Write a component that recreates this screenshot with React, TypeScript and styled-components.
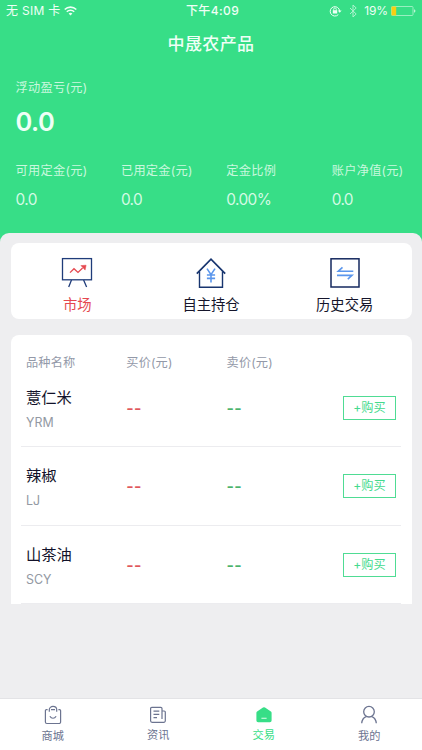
import React from 'react';
import styled, { createGlobalStyle } from 'styled-components';

const GREEN = '#37de87';
const SLATE = '#6c7490';
const NAVY = '#1f3c7a';
const BLUE = '#5b96ec';
const RED = '#e5484f';

const Global = createGlobalStyle`
  * { box-sizing: border-box; }
  body {
    margin: 0;
    background: #eeeef0;
    font-family: Inter, "Noto Sans CJK SC", sans-serif;
  }
`;

const Screen = styled.div`
  width: 422px;
  height: 750px;
  display: flex;
  flex-direction: column;
  overflow: hidden;
  background: #eeeef0;
`;

const Hero = styled.header`
  height: 243px;
  flex: none;
  background: ${GREEN};
  color: #effff6;
`;

const StatusBar = styled.div`
  height: 22px;
  padding: 0 6px;
  display: grid;
  grid-template-columns: 1fr auto 1fr;
  align-items: center;
  font-size: 12px;
  line-height: 22px;
  white-space: nowrap;
`;

const StatusSide = styled.div<{ $end?: boolean }>`
  display: flex;
  align-items: center;
  justify-content: ${(p) => (p.$end ? 'flex-end' : 'flex-start')};
  letter-spacing: ${(p) => (p.$end ? '-0.1px' : '0.3px')};
  svg { flex: none; }
`;

const Clock = styled.div`
  font-weight: 500;
  letter-spacing: 0.4px;
  padding-left: 3px;
`;

const Percent = styled.span`
  margin: 0 3px 0 3px;
`;

const Title = styled.h1`
  margin: 0;
  height: 44px;
  line-height: 45px;
  text-align: center;
  font-size: 17px;
  font-weight: 500;
  letter-spacing: 0.4px;
`;

const Profit = styled.div`
  padding: 12px 15.5px 0;
`;

const Label = styled.div`
  font-size: 12.2px;
  line-height: 20px;
  letter-spacing: 0.3px;
  white-space: nowrap;
  color: #c9f8de;
`;

const BigValue = styled.div`
  margin-top: 8px;
  font-size: 25.5px;
  line-height: 32px;
  font-weight: 600;
  letter-spacing: -0.5px;
`;

const Stats = styled.div`
  display: grid;
  grid-template-columns: repeat(4, 105.4px);
  padding: 23px 0 0 15.5px;
`;

const StatValue = styled.div`
  margin-top: 9px;
  font-size: 15.4px;
  line-height: 20px;
  letter-spacing: -0.6px;
  color: #d3fae4;
`;

const Sheet = styled.main`
  flex: 1;
  margin-top: -10px;
  padding: 10px 10.5px 0;
  border-radius: 9px 9px 0 0;
  background: #eeeef0;
  overflow: hidden;
`;

const NavCard = styled.nav`
  height: 76px;
  padding-top: 14px;
  display: grid;
  grid-template-columns: repeat(3, 1fr);
  border-radius: 8px;
  background: #fff;
`;

const NavItem = styled.div<{ $active?: boolean }>`
  display: flex;
  flex-direction: column;
  align-items: center;
  font-size: 14.3px;
  line-height: 20px;
  color: ${(p) => (p.$active ? RED : '#15152b')};
  svg { margin-bottom: 6px; }
`;

const ListCard = styled.section`
  margin-top: 16px;
  height: 269px;
  border-radius: 8px 8px 0 0;
  background: #fff;
  padding: 0 10.5px 0 10px;
`;

const columns = `
  display: grid;
  grid-template-columns: 100.3px 100.3px 1fr auto;
  padding: 0 5px 0 5.5px;
`;

const TableHead = styled.div`
  ${columns}
  padding-top: 18px;
  height: 34px;
  font-size: 12.2px;
  line-height: 20px;
  letter-spacing: 0.15px;
  color: #9399a8;
`;

const Row = styled.div`
  ${columns}
  height: 78.3px;
  border-bottom: 1px solid #ececef;
`;

const Name = styled.div`
  padding-top: 18px;
  font-size: 15.3px;
  line-height: 22px;
  color: #12122a;
`;

const Code = styled.div`
  margin-top: 4px;
  font-size: 12.4px;
  line-height: 20px;
  color: #9399a3;
`;

const Dashes = styled.span<{ $tone: string }>`
  padding-top: 29px;
  font-size: 16px;
  line-height: 20px;
  font-weight: 600;
  letter-spacing: 0.3px;
  color: ${(p) => p.$tone};
`;

const Buy = styled.button`
  width: 53px;
  height: 24px;
  margin-top: 27px;
  padding: 0;
  border: 1px solid #4fdc94;
  border-radius: 0;
  background: #fff;
  color: #45da8d;
  font: 12.2px/20px Inter, "Noto Sans CJK SC", sans-serif;
`;

const TabBar = styled.footer`
  height: 52px;
  flex: none;
  display: grid;
  grid-template-columns: repeat(4, 1fr);
  border-top: 1px solid #e3e3e6;
  background: #fff;
`;

const Tab = styled.div<{ $active?: boolean; $raised?: boolean }>`
  display: flex;
  flex-direction: column;
  align-items: center;
  padding-top: 6px;
  font-size: 11.2px;
  line-height: 16px;
  color: ${(p) => (p.$active ? GREEN : SLATE)};
  svg { margin-bottom: ${(p) => (p.$raised ? '2px' : '3px')}; }
`;

const WifiIcon = () => (
  <svg width="13" height="10" viewBox="0 0 13 10" fill="none" stroke="currentColor" strokeWidth="1.6">
    <path d="M.7 3.5a8.3 8.3 0 0 1 11.6 0M2.8 5.7a5.3 5.3 0 0 1 7.4 0" />
    <path d="M4.6 7.6a2.8 2.8 0 0 1 3.8 0L6.5 9.6z" fill="currentColor" stroke="none" />
  </svg>
);

const LockIcon = () => (
  <svg width="13" height="12" viewBox="0 0 13 12" fill="none" stroke="currentColor">
    <path d="M9.3 9.6A4.7 4.7 0 1 1 10.6 6" />
    <path d="M8.8 5.4h3.8l-1.9 2.3z" fill="currentColor" stroke="none" />
    <rect x="3.8" y="5.2" width="4.4" height="3.3" fill="currentColor" stroke="none" />
    <path d="M4.7 5.4V4.2a1.3 1.3 0 0 1 2.6 0v1.2" strokeWidth=".8" />
  </svg>
);

const BluetoothIcon = () => (
  <svg width="19" height="14" viewBox="-3 0 19 14" fill="none" stroke="currentColor" strokeWidth="1" opacity=".65">
    <path d="M5 4l6.2 6L8 13V1l3.2 3L5 10" />
  </svg>
);

const BatteryIcon = () => (
  <svg width="25" height="10" viewBox="0 0 25 10">
    <rect x=".5" y=".5" width="21.5" height="9" rx="1" fill="none" stroke="#a4f0c6" strokeWidth=".9" />
    <rect x=".5" y=".5" width="4.7" height="9" fill="#f8cf12" />
    <path d="M23.2 3.3c1.6.6 1.6 2.8 0 3.4z" fill="#d9fbe8" />
  </svg>
);

const BoardIcon = () => (
  <svg width="32" height="32" viewBox="0 0 32 32" fill="none" stroke={NAVY} strokeWidth="1.3">
    <rect x="1.5" y="1.6" width="29" height="21.2" />
    <path d="M10.5 23l-2.800 7M22.600 23l3 7" />
    <path d="M9 15.600l4-3.900 4 3.700 4.600-4.400" stroke={RED} />
    <path d="M19.900 8.600l5.200-.4-1 4.900z" fill={RED} stroke={RED} strokeWidth=".5" />
  </svg>
);

const HouseIcon = () => (
  <svg width="32" height="32" viewBox="0 0 32 32" fill="none" stroke="#18356f" strokeWidth="1.4">
    <path d="M1.8 16.7L16 2.1l14.2 14.6" strokeWidth="1.7" />
    <path d="M4.5 14.5v15.8h23V14.5" />
    <path d="M12 11.6l4 6 4-6M16 17.4v8M11.9 18h8.2M11.9 21.4h8.2" stroke={BLUE} strokeWidth="1.6" />
  </svg>
);

const SwapIcon = () => (
  <svg width="32" height="32" viewBox="0 0 32 32" fill="none" stroke="#14285f" strokeWidth="1.5">
    <rect x="2" y="1.8" width="28" height="28.2" />
    <path d="M24.3 14.2H9.3l4.2-3.8M8 18.400h15l-4.200 3.800" stroke={BLUE} strokeWidth="1.6" />
  </svg>
);

const BagIcon = () => (
  <svg width="18" height="20" viewBox="0 0 18 20" fill="none" stroke="currentColor" strokeWidth="1.2">
    <path d="M3.6 4.6H2.4a1 1 0 0 0-1 1v11.4a1.5 1.5 0 0 0 1.5 1.5h12.2a1.5 1.5 0 0 0 1.5-1.5V5.6a1 1 0 0 0-1-1h-1.2M7 4.6h4" />
    <path d="M5.3 6.8V4.6a3.7 3.2 0 0 1 7.4 0v2.2M5.9 11.3c1.5 2.6 4.7 2.6 6.2 0" />
  </svg>
);

const NewsIcon = () => (
  <svg width="18" height="20" viewBox="0 0 18 20" fill="none" stroke="currentColor" strokeWidth="1.2">
    <path d="M13 14V3.500a1.200 1.200 0 0 0-1.200-1.200H2.800a1.200 1.200 0 0 0-1.200 1.200v12.300a1.500 1.500 0 0 0 1.500 1.500h11.600a1.600 1.600 0 0 0 1.600-1.600V7.200a1.200 1.200 0 0 0-1.200-1.200H13" />
    <path d="M4.500 6.200h5.800M4.500 9.400h5.800M4.500 12.600h3.500" />
  </svg>
);

const TradeIcon = () => (
  <svg width="18" height="20" viewBox="0 0 18 20">
    <path d="M8 2.500a1.800 1.800 0 0 1 2 0l5.900 4a1.700 1.700 0 0 1 .7 1.400v7.600a1.700 1.700 0 0 1-1.700 1.700H3.100a1.700 1.700 0 0 1-1.700-1.700V7.900a1.700 1.700 0 0 1 .7-1.400z" fill="currentColor" />
    <path d="M6.400 13.300h5.200" stroke="#c8f8dd" strokeWidth="1.200" />
  </svg>
);

const UserIcon = () => (
  <svg width="18" height="20" viewBox="0 0 18 20" fill="none" stroke="currentColor" strokeWidth="1.3">
    <circle cx="9" cy="6.700" r="5.300" />
    <path d="M1.700 18.300c.3-3.600 2.200-5.900 4.600-6.700M16.300 18.300c-.3-3.600-2.200-5.900-4.600-6.700" />
  </svg>
);

const stats = [
  ['可用定金(元)', '0.0'],
  ['已用定金(元)', '0.0'],
  ['定金比例', '0.00%'],
  ['账户净值(元)', '0.0'],
];

const products = [
  ['薏仁米', 'YRM'],
  ['辣椒', 'LJ'],
  ['山茶油', 'SCY'],
];

export default function App() {
  return (
    <>
      <Global />
      <Screen>
        <Hero>
          <StatusBar>
            <StatusSide>
              <span>无 SIM 卡&nbsp;</span>
              <WifiIcon />
            </StatusSide>
            <Clock>下午4:09</Clock>
            <StatusSide $end>
              <LockIcon />
              <BluetoothIcon />
              <Percent>19%</Percent>
              <BatteryIcon />
            </StatusSide>
          </StatusBar>
          <Title>中晟农产品</Title>
          <Profit>
            <Label>浮动盈亏(元)</Label>
            <BigValue>0.0</BigValue>
          </Profit>
          <Stats>
            {stats.map(([label, value]) => (
              <div key={label}>
                <Label>{label}</Label>
                <StatValue>{value}</StatValue>
              </div>
            ))}
          </Stats>
        </Hero>
        <Sheet>
          <NavCard>
            <NavItem $active><BoardIcon />市场</NavItem>
            <NavItem><HouseIcon />自主持仓</NavItem>
            <NavItem><SwapIcon />历史交易</NavItem>
          </NavCard>
          <ListCard>
            <TableHead>
              <span>品种名称</span>
              <span>买价(元)</span>
              <span>卖价(元)</span>
            </TableHead>
            {products.map(([name, code]) => (
              <Row key={code}>
                <div>
                  <Name>{name}</Name>
                  <Code>{code}</Code>
                </div>
                <Dashes $tone="#e0575c">--</Dashes>
                <Dashes $tone="#4bb36c">--</Dashes>
                <Buy>+购买</Buy>
              </Row>
            ))}
          </ListCard>
        </Sheet>
        <TabBar>
          <Tab><BagIcon />商城</Tab>
          <Tab $raised><NewsIcon />资讯</Tab>
          <Tab $active $raised><TradeIcon />交易</Tab>
          <Tab><UserIcon />我的</Tab>
        </TabBar>
      </Screen>
    </>
  );
}
